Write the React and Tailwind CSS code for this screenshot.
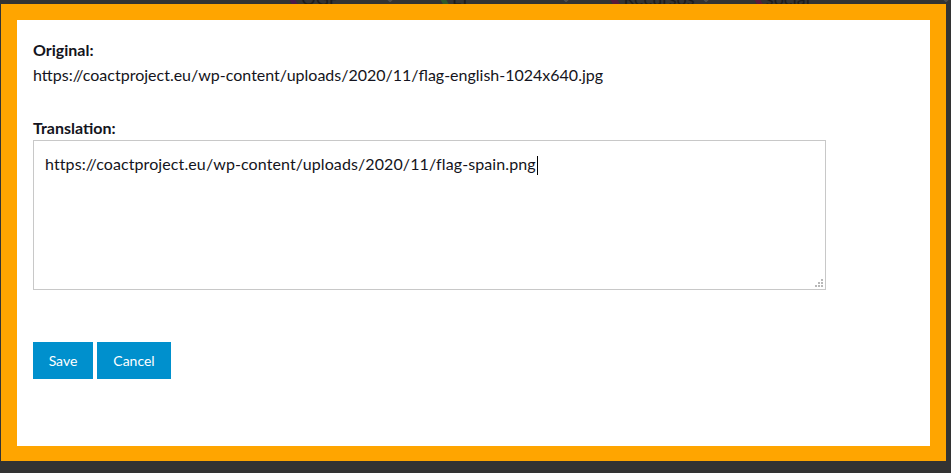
import React from "react";

const font = { fontFamily: "Lato, 'Open Sans', sans-serif" };

function NavItem({ x, label, icon }) {
  return (
    <div className={`flex items-end gap-[6px] text-[18px] leading-[18px] text-[#1c1c1c] ${x}`}>
      <span className={`inline-block w-[6px] h-[14px] rotate-[-30deg] ${icon}`} />
      <span>{label}</span>
      <span className="text-[12px] text-[#555]">⌄</span>
    </div>
  );
}

export default function App() {
  return (
    <div className="w-[951px] h-[473px] bg-[#333333] flex flex-col overflow-hidden" style={font}>
      <div className="h-[4px] overflow-hidden flex items-end">
        <div className="flex items-end mb-[-3px]">
          <NavItem x="ml-[290px]" label="Sobre OGP" icon="bg-[#4a1a4a]" />
          <NavItem x="ml-[46px]" label="Acciones de LT" icon="bg-[#2f5a2a]" />
          <NavItem x="ml-[40px]" label="Recursos" icon="bg-[#5a1a3a]" />
          <NavItem x="ml-[44px]" label="Ciencia ciudadana social" icon="bg-[#5a1a3a]" />
        </div>
      </div>
      <div className="ml-[1px] w-[945px] h-[457px] bg-[#ffa500] pt-[16px] pl-[16px]">
        <div className="w-[913px] h-[426px] bg-white pl-[16px] pt-[19px] text-[#141420]">
          <div className="text-[16px] leading-[21px] font-bold">Original:</div>
          <div className="mt-[4px] text-[16px] leading-[21px]">
            https://coactproject.eu/wp-content/uploads/2020/11/flag-english-1024x640.jpg
          </div>
          <div className="mt-[32px] text-[16px] leading-[21px] font-bold">Translation:</div>
          <div className="mt-[2px] relative w-[793px] h-[150px] border border-[#c8c8c8] pl-[11px] pt-[12px] text-[16px] leading-[21px] tracking-[0.1px]">
            <span>https://coactproject.eu/wp-content/uploads/2020/11/flag-spain.png</span>
            <span className="inline-block w-[1px] h-[19px] bg-black align-middle ml-[1px]" />
            <svg className="absolute right-[2px] bottom-[2px]" width="8" height="8" viewBox="0 0 8 8">
              <rect x="6" y="0" width="2" height="2" fill="#b8b8b8" />
              <rect x="3" y="3" width="2" height="2" fill="#b8b8b8" />
              <rect x="6" y="3" width="2" height="2" fill="#b8b8b8" />
              <rect x="0" y="6" width="2" height="2" fill="#b8b8b8" />
              <rect x="3" y="6" width="2" height="2" fill="#b8b8b8" />
              <rect x="6" y="6" width="2" height="2" fill="#b8b8b8" />
            </svg>
          </div>
          <div className="mt-[52px] flex gap-[4px]">
            <button className="w-[60px] h-[37px] bg-[#0090cd] text-white text-[14px]">Save</button>
            <button className="w-[74px] h-[37px] bg-[#0090cd] text-white text-[14px]">Cancel</button>
          </div>
        </div>
      </div>
    </div>
  );
}
